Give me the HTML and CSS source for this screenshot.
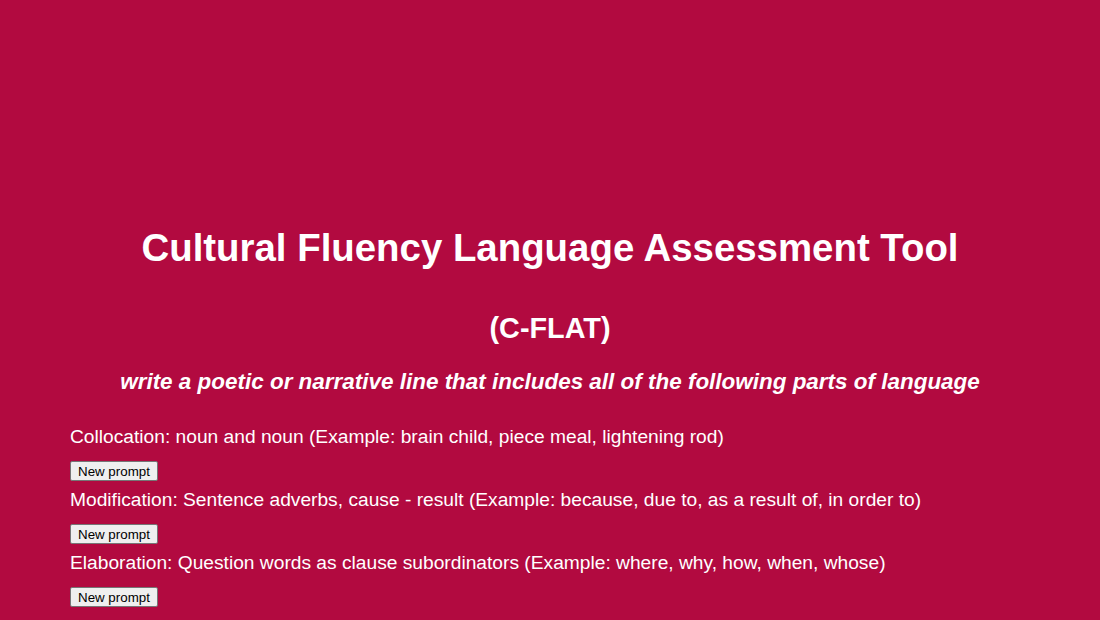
FILE: index.html
```html
<!DOCTYPE html>
<html lang="en">
<head>
<meta charset="utf-8">
<title>C-FLAT</title>
<link rel="stylesheet" href="styles.css">
</head>
<body>
<main class="page">
  <h1 class="title">Cultural Fluency Language Assessment Tool</h1>
  <h2 class="subtitle">(C-FLAT)</h2>
  <h3 class="instruction">write a poetic or narrative line that includes all of the following parts of language</h3>
  <section class="prompts">
    <div class="prompt">
      <p class="prompt-text">Collocation: noun and noun (Example: brain child, piece meal, lightening rod)</p>
      <button class="prompt-btn" type="button">New prompt</button>
    </div>
    <div class="prompt">
      <p class="prompt-text">Modification: Sentence adverbs, cause - result (Example: because, due to, as a result of, in order to)</p>
      <button class="prompt-btn" type="button">New prompt</button>
    </div>
    <div class="prompt">
      <p class="prompt-text">Elaboration: Question words as clause subordinators (Example: where, why, how, when, whose)</p>
      <button class="prompt-btn" type="button">New prompt</button>
    </div>
  </section>
</main>
</body>
</html>
```

FILE: styles.css
```css
html, body {
  margin: 0;
  padding: 0;
}
body {
  background: #b20a40;
  color: #ffffff;
  font-family: "Liberation Sans", Arial, sans-serif;
  font-size: 19.2px;
}
.page {
  padding: 226px 70px 0 70px;
}
.title {
  margin: 0;
  font-size: 38.4px;
  line-height: 44px;
  font-weight: bold;
  text-align: center;
}
.subtitle {
  margin: 41.5px 0 0 0;
  font-size: 28.8px;
  line-height: 33px;
  font-weight: bold;
  text-align: center;
}
.instruction {
  margin: 24.5px 0 0 0;
  font-size: 22.46px;
  line-height: 26px;
  font-weight: bold;
  font-style: italic;
  text-align: center;
}
.prompts {
  margin-top: 31px;
}
.prompt {
  display: flex;
  flex-direction: column;
  align-items: flex-start;
  margin-bottom: 8px;
}
.prompt-text {
  margin: 0;
  font-size: 19.2px;
  line-height: 22px;
}
.prompt-btn {
  margin-top: 13px;
  height: 20px;
  padding: 1px 7px;
  font-family: "Liberation Sans", Arial, sans-serif;
  font-size: 13.33px;
  color: #000;
  background: #efefef;
  border: 1px solid #767676;
  border-radius: 2px;
}
```
